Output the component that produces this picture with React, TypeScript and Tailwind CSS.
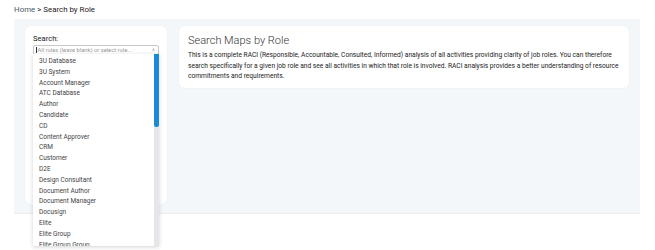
import React from "react";

const roles = [
  "3U Database",
  "3U System",
  "Account Manager",
  "ATC Database",
  "Author",
  "Candidate",
  "CD",
  "Content Approver",
  "CRM",
  "Customer",
  "D2E",
  "Design Consultant",
  "Document Author",
  "Document Manager",
  "Docusign",
  "Elite",
  "Elite Group",
  "Elite Group Group",
];

export default function App() {
  return (
    <div
      className="w-[655px] h-[250px] bg-white overflow-hidden text-[#333]"
      style={{ fontFamily: "Roboto, 'Liberation Sans', Arial, sans-serif" }}
    >
      <div className="pl-[14px] pt-[3px] h-[19px] text-[7.9px] leading-[14px]">
        <span className="text-[#4a5a6c]">Home</span>
        <span className="text-[#222]"> &gt; Search by Role</span>
      </div>
      <div className="ml-[14px] w-[626px] h-[195px] bg-[#f3f7fa] border-b border-[#e8ecef] px-[11px] pt-[7px] flex gap-[12px] items-start">
        <div className="relative w-[142px] h-[178px] bg-white rounded-[6px] shadow-[0_0_2px_rgba(0,0,0,0.06)] px-[8px] pt-[8px]">
          <div className="text-[7.6px] leading-[10px] text-[#222]">Search:</div>
          <div className="mt-[1px] h-[10px] border border-[#c8c8c8] rounded-[2px] flex items-center justify-between pl-[2px] pr-[3px]">
            <div className="flex items-center">
              <span className="w-[0.5px] h-[6px] bg-[#333] mr-[1px]"></span>
              <span className="text-[5.8px] leading-[7px] text-[#9a9a9a] whitespace-nowrap">
                All roles (leave blank) or select role...
              </span>
            </div>
            <span className="text-[5px] leading-[5px] text-[#777]">˄</span>
          </div>
          <div className="absolute left-[8px] top-[28px] w-[126px] h-[192px] bg-white shadow-[0_1px_4px_rgba(0,0,0,0.18)] overflow-hidden flex z-10">
            <div className="flex-1 pt-[2px] pl-[6px]">
              {roles.map((r) => (
                <div key={r} className="h-[10.8px] text-[6.5px] leading-[10.8px] text-[#444] whitespace-nowrap">
                  {r}
                </div>
              ))}
            </div>
            <div className="w-[5px] h-full bg-[#e6e6ea] flex flex-col">
              <div className="h-[73px] bg-[#1b8ad6] rounded-b-[2px]"></div>
            </div>
          </div>
        </div>
        <div className="w-[450px] h-[62px] bg-white rounded-[6px] shadow-[0_0_2px_rgba(0,0,0,0.06)] px-[9px] pt-[8px]">
          <div className="text-[11px] leading-[14px] font-light text-[#333]">Search Maps by Role</div>
          <p className="mt-[2px] text-[6.65px] leading-[10.5px] text-[#222]">
            This is a complete RACI (Responsible, Accountable, Consulted, Informed) analysis of all activities providing clarity of job roles. You can therefore search specifically for a given job role and see all activities in which that role is involved. RACI analysis provides a better understanding of resource commitments and requirements.
          </p>
        </div>
      </div>
    </div>
  );
}
